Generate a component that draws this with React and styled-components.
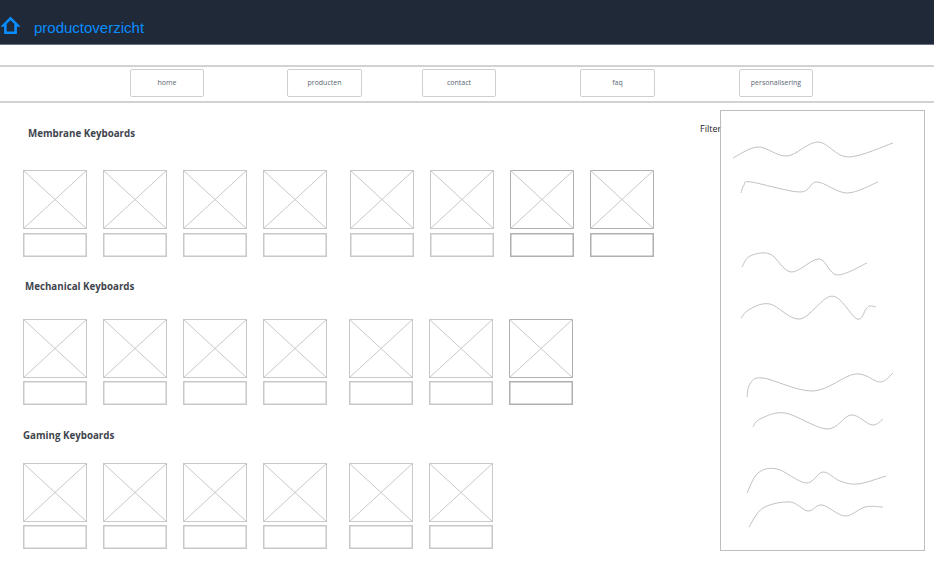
import styled, { createGlobalStyle } from "styled-components";

const GlobalStyle = createGlobalStyle`
  html, body { margin: 0; padding: 0; background: #fff; }
  * { box-sizing: border-box; }
`

const Header = styled.header`
  height: 45px;
  background-color: #1f2937;
  border-bottom: 1px solid #6b7280;
  display: flex;
  align-items: flex-start;
  padding: 16px 0 0 1px;
`

const Title = styled.h1`
  margin: 3px 0 0 14px;
  font: 400 15px/18px "Liberation Sans", Arial, sans-serif;
  color: #0a8dff;
`

const Nav = styled.nav`
  margin-top: 20px;
  height: 38px;
  border-top: 2px solid #d2d2d2;
  border-bottom: 2px solid #d2d2d2;
  display: flex;
  padding: 2px 0 0 130px;
`

const NavButton = styled.a`
  width: ${p => p.$w || 74}px;
  height: 28px;
  margin-right: ${p => p.$gap || 0}px;
  border: 1px solid #cfcfcf;
  border-radius: 2px;
  display: flex;
  align-items: center;
  justify-content: center;
  font: 400 7px/10px "Open Sans", sans-serif;
  color: #5a6672;
`

const Main = styled.main`
  display: flex;
  align-items: flex-start;
`

const Catalog = styled.div`
  width: 700px;
  padding-top: 24px;
`

const Section = styled.section`
  padding-left: 23px;
  margin-bottom: ${p => p.$after || 0}px;
`

const Heading = styled.h2`
  margin: 0 0 ${p => p.$gap}px ${p => p.$indent || 0}px;
  font: 700 9.75px/14px "Open Sans", sans-serif;
  color: #3f454d;
`

const TileRow = styled.div`
  display: flex;
  gap: 16px;

  & > div:nth-child(5) {
    margin-left: ${p => p.$split}px;
  }
`

const Tile = styled.div`
  width: 64px;
  color: ${p => p.$strong ? "#b0b0b0" : "#c8c8c8"};
`

const Thumb = styled.svg`
  display: block;
  width: 64px;
  height: 59px;
  margin-bottom: ${p => p.$space}px;
`

const Caption = styled.div`
  height: 24px;
  border: 1px solid currentColor;
  box-shadow: inset 0 0 0 0.5px currentColor;
`

const FilterLabel = styled.div`
  width: 20px;
  margin-top: 19px;
  font: 400 9px/13px "Open Sans", sans-serif;
  color: #222;
  white-space: nowrap;
`

const FilterPanel = styled.aside`
  width: 205px;
  height: 441px;
  margin-top: 7px;
  border: 1px solid #bdbdbd;
  overflow: hidden;
`

const Squiggles = styled.svg`
  display: block;
  width: 205px;
  height: 441px;
  margin: -1px;
`

const navItems = [
  { label: "home", gap: 83 },
  { label: "producten", gap: 60, w: 75 },
  { label: "contact", gap: 84 },
  { label: "faq", gap: 84, w: 75 },
  { label: "personalisering" },
]

const sections = [
  { name: "Membrane Keyboards", indent: 5, gap: 29, split: 6.5, after: 23, space: 4, strong: [6, 7], count: 8 },
  { name: "Mechanical Keyboards", indent: 2, gap: 25, split: 6, after: 24, space: 3, strong: [6], count: 7 },
  { name: "Gaming Keyboards", indent: 0, gap: 20, split: 6, after: 0, space: 3, strong: [], count: 6 },
]

const waves = [
  [[733,158],[758,147],[787,156],[818,142],[848,157],[893,143]],
  [[741,193],[744,185],[751,182],[800,192],[817,182],[847,193],[878,182]],
  [[742,267],[750,256],[770,254],[791,272],[819,259],[837,275],[867,263]],
  [[741,318],[750,309],[770,304],[800,319],[832,296],[857,319],[866,309],[870,306],[876,307]],
  [[747,397],[750,384],[763,378],[813,391],[855,374],[880,382],[893,373]],
  [[753,427],[760,419],[785,413],[827,429],[851,415],[872,425],[883,419]],
  [[747,493],[758,473],[777,469],[806,483],[823,472],[840,481],[858,484],[886,476]],
  [[749,527],[763,508],[790,502],[808,511],[822,505],[845,516],[865,507],[883,507]],
]

// smooth line through the points (catmull-rom to bezier)
const toPath = pts => {
  let d = `M${pts[0][0]} ${pts[0][1]}`
  for (let i = 0; i < pts.length - 1; i++) {
    const p0 = pts[i - 1] || pts[i]
    const p1 = pts[i]
    const p2 = pts[i + 1]
    const p3 = pts[i + 2] || p2
    const c1x = p1[0] + (p2[0] - p0[0]) / 6
    const c1y = p1[1] + (p2[1] - p0[1]) / 6
    const c2x = p2[0] - (p3[0] - p1[0]) / 6
    const c2y = p2[1] - (p3[1] - p1[1]) / 6
    d += ` C${c1x} ${c1y} ${c2x} ${c2y} ${p2[0]} ${p2[1]}`
  }
  return d
}

const HomeIcon = () => (
  <svg width="19" height="19" viewBox="0 0 19 19" fill="none" stroke="#0a8dff" strokeWidth="2.6" strokeLinejoin="miter">
    <path d="M9.5 2.4 L16.6 9.4 H14.6 V16.8 H4.4 V9.4 H2.4 Z" />
  </svg>
)

const Placeholder = ({ space }) => (
  <Thumb $space={space} viewBox="0 0 64 59" preserveAspectRatio="none">
    <rect x="0.5" y="0.5" width="63" height="58" fill="none" stroke="currentColor" />
    <path d="M0 0 L64 59 M64 0 L0 59" stroke="#c8c8c8" strokeWidth="1" fill="none" />
  </Thumb>
)

const App = () => {
  return (
    <>
      <GlobalStyle />
      <Header>
        <HomeIcon />
        <Title>productoverzicht</Title>
      </Header>

      <Nav>
        {navItems.map(n => (
          <NavButton key={n.label} $gap={n.gap} $w={n.w}>{n.label}</NavButton>
        ))}
      </Nav>

      <Main>
        <Catalog>
          {sections.map(s => (
            <Section key={s.name} $after={s.after}>
              <Heading $indent={s.indent} $gap={s.gap}>{s.name}</Heading>
              <TileRow $split={s.split}>
                {Array.from({ length: s.count }).map((_, idx) => (
                  <Tile key={idx} $strong={s.strong.includes(idx)}>
                    <Placeholder space={s.space} />
                    <Caption />
                  </Tile>
                ))}
              </TileRow>
            </Section>
          ))}
        </Catalog>

        <FilterLabel>Filter</FilterLabel>
        <FilterPanel>
          <Squiggles viewBox="720 110 205 441">
            {waves.map((w, idx) => (
              <path key={idx} d={toPath(w)} fill="none" stroke="#c2c2c2" strokeWidth="1" />
            ))}
          </Squiggles>
        </FilterPanel>
      </Main>
    </>
  )
}

export default App
